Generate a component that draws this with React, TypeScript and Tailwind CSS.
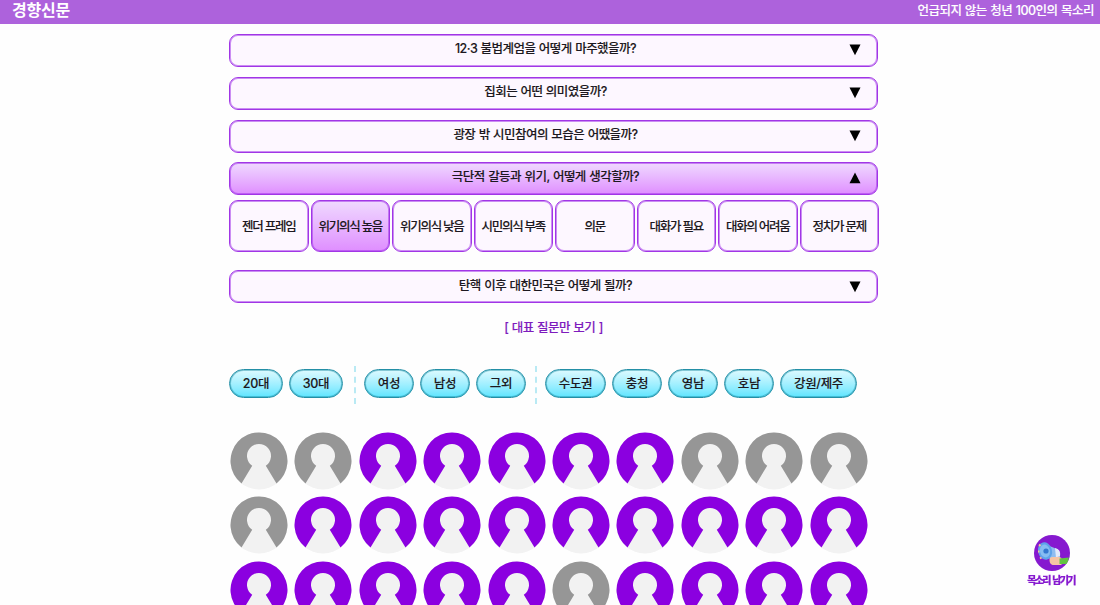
import clsx from "clsx";

const topQuestions = [
  { text: "12·3 불법계엄을 어떻게 마주했을까?", box: "mt-[10px] h-[33px]" },
  { text: "집회는 어떤 의미였을까?", box: "mt-[10px] h-[33px]" },
  { text: "광장 밖 시민참여의 모습은 어땠을까?", box: "mt-[10px] h-[33px]" },
];

const answers = [
  "젠더 프레임",
  "위기의식 높음",
  "위기의식 낮음",
  "시민의식 부족",
  "의문",
  "대화가 필요",
  "대화의 어려움",
  "정치가 문제",
];

const filters = [
  [
    { label: "20대", width: "w-[54px]" },
    { label: "30대", width: "w-[54px]" },
  ],
  [
    { label: "여성", width: "w-[50px]" },
    { label: "남성", width: "w-[50px]" },
    { label: "그외", width: "w-[50px]" },
  ],
  [
    { label: "수도권", width: "w-[61px]" },
    { label: "충청", width: "w-[50px]" },
    { label: "영남", width: "w-[50px]" },
    { label: "호남", width: "w-[50px]" },
    { label: "강원/제주", width: "w-[77px]" },
  ],
];

// 1 = matches the selected answer
const people = ["0011111000", "0111111111", "1111101111"];

const line = "border border-[#a136e6] shadow-[inset_0_0_0_1px_#a030e888]";
const label = "text-[12.5px] font-medium [-webkit-text-stroke:0.1px_currentColor]";

function Question({ text, open, className }: { text: string; open?: boolean; className?: string }) {
  return (
    <button
      className={clsx(
        "flex w-[649px] items-start rounded-[9px] pt-[4px] pr-[16px]",
        line,
        open ? "bg-linear-to-b from-[#efd9ff] to-[#df8eff]" : "bg-[#fdf7ff]",
        className
      )}
    >
      <span className={clsx(label, "flex-1 pl-[12px] leading-[20px] tracking-[-0.53px] [word-spacing:0.6px]")}>{text}</span>
      <svg viewBox="0 0 12 12" className="mt-[5px] h-3 w-3 text-black">
        <path d={open ? "M.5 11.2 6 .5l5.500 10.700z" : "M.5.5h11L6 11.200z"} />
      </svg>
    </button>
  );
}

function Avatar({ active }: { active: boolean }) {
  return (
    <svg viewBox="0 0 58 58" className="h-[58px] w-[58px]">
      <circle cx="29" cy="29" r="28.500" fill="#f2f2f2" />
      <path
        d="M11.500 51.400A28.500 28.500 0 1 1 46.500 51.400L35.800 33.800A12 12 0 1 0 22.200 33.800Z"
        fill={active ? "#8b00e0" : "#969696"}
      />
    </svg>
  );
}

function VoiceButton() {
  return (
    <button className="fixed right-[23px] bottom-[18px] flex w-[52px] flex-col items-center">
      <svg viewBox="0 0 38 38" className="ml-[2px] h-[38px] w-[38px]">
        <circle cx="19" cy="18" r="18" fill="#8619cf" />
        <path d="M10 8.500 24 14q4 2 3 8l-15 2z" fill="#8fbdf0" />
        <path d="M22 13q6 1 5 8l-4 1.500z" fill="#e3eafa" />
        <ellipse cx="12" cy="16" rx="7" ry="8.800" transform="rotate(-15 12 16)" fill="#5ea3ea" />
        <ellipse cx="12" cy="16" rx="5" ry="6.500" transform="rotate(-15 12 16)" fill="#86bdf2" />
        <circle cx="13" cy="16" r="2.600" fill="#3478d0" />
        <path d="M6 9.500 7.500 11M5 16.500h1.500M7 23.500l1.500-1" stroke="#f7c992" strokeWidth="1.800" />
        <path d="M16.500 25q0-3 3-3h7l2 1v7h-9q-3-1-3-5z" fill="#f5c4a4" />
        <path d="m26.500 23.500 9.300-1q-.3 4-2.300 6.500h-7z" fill="#62c442" />
      </svg>
      <span className="text-[10px] leading-[14px] font-black tracking-[-1.7px] whitespace-nowrap text-[#8619cf] [-webkit-text-stroke:0.2px_#8619cf] [word-spacing:2px]">
        목소리 남기기
      </span>
    </button>
  );
}

export default function App() {
  return (
    <div className="h-[605px] overflow-hidden bg-[#fefefe] font-[Inter,'Noto_Sans_CJK_KR',sans-serif] text-[#1c1820]">
      <header className="flex h-6 justify-between bg-[#ad62dc] pr-[6px] pl-3 text-white">
        <h1 className="text-[16px] leading-[20px] font-bold tracking-[-0.2px]">경향신문</h1>
        <p className={clsx(label, "leading-[22px] tracking-[-0.5px] [word-spacing:0.6px]")}>언급되지 않는 청년 100인의 목소리</p>
      </header>

      <main className="ml-[229px] w-[650px]">
        {topQuestions.map((q) => (
          <Question key={q.text} text={q.text} className={q.box} />
        ))}
        <Question text="극단적 갈등과 위기, 어떻게 생각할까?" open className="mt-[9px] h-[33px]" />
        <div className="mt-[5px] grid grid-cols-8 gap-[2px]">
          {answers.map((a) => (
            <button
              key={a}
              className={clsx(
                "h-[52px] rounded-[9px] pt-[2px] tracking-[-1.25px] whitespace-nowrap",
                label,
                line,
                a === "위기의식 높음" ? "bg-linear-to-b from-[#efd9ff] to-[#df8eff]" : "bg-[#fdf7ff]"
              )}
            >
              {a}
            </button>
          ))}
        </div>
        <Question text="탄핵 이후 대한민국은 어떻게 될까?" className="mt-[18px] h-[33px] pt-[5px]" />

        <button className={clsx(label, "mt-[15px] block w-[649px] text-center leading-5 tracking-[-0.53px] text-[#7e1bbd] [word-spacing:0.6px]")}>
          [ 대표 질문만 보기 ]
        </button>

        <div className="mt-[28px] flex h-[38px]">
          {filters.map((group, i) => (
            <div
              key={i}
              className={clsx(
                "flex gap-[6px] pt-[3px]",
                i > 0 && "border-l-2 border-dashed border-[#b9eaf4]",
                i === 1 && "ml-[11px] pl-[8px]",
                i === 2 && "ml-[9px] pl-[8px]"
              )}
            >
              {group.map((f) => (
                <button
                  key={f.label}
                  className={clsx(
                    label,
                    "h-[29px] rounded-full border border-[#238fa6] bg-linear-to-b from-[#dcfaff] to-[#5ce5ff] leading-[26px] tracking-[-0.3px] whitespace-nowrap shadow-[inset_0_0_0_1px_#238fa677]",
                    f.width
                  )}
                >
                  {f.label}
                </button>
              ))}
            </div>
          ))}
        </div>

        <div className="mt-[28px] ml-[1px] grid grid-cols-[repeat(10,64.400px)] gap-y-[6.400px]">
          {people.map((row, r) =>
            row.split("").map((p, i) => <Avatar key={`${r}-${i}`} active={p === "1"} />)
          )}
        </div>
      </main>

      <VoiceButton />
    </div>
  );
}
